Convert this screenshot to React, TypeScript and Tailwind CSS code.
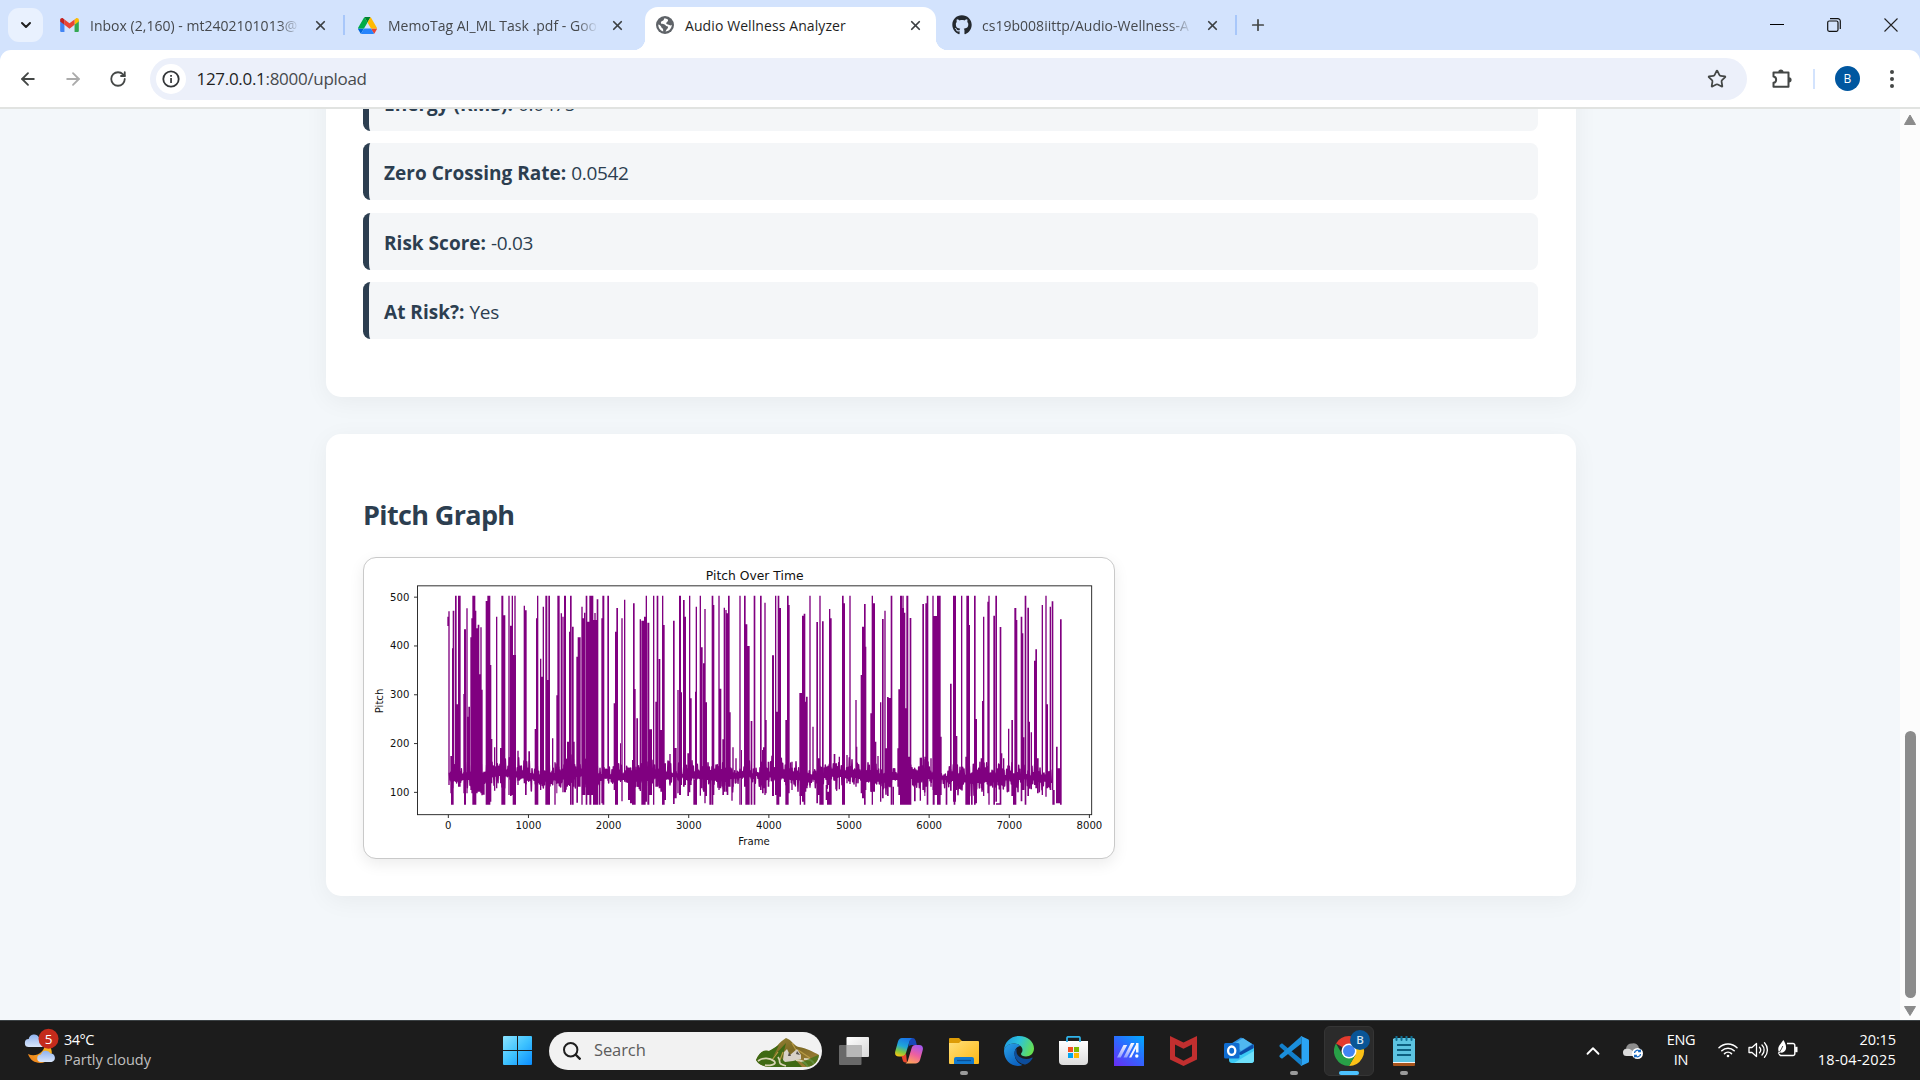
import React from "react";
import { ArrowLeft, ArrowRight, ChevronDown, ChevronUp, Plus, RotateCw, Star, X } from "lucide-react";
import { FaGithub } from "react-icons/fa";

/* ---------- chart ---------- */

// [left, right, top, bottom] of each pitch excursion in chart units
const FIRST: number[][] = [
  [292, 296, 230, 258], [295, 299, 214, 735], [301, 306, 648, 760], [303, 311, 700, 794], [306, 309, 325, 700], [308, 313, 212, 710],
  [315, 320, 167, 725], [320, 325, 493, 725], [324, 332, 167, 740], [340, 343, 462, 760], [342, 348, 268, 794], [349, 353, 205, 760],
  [352, 355, 530, 720], [355, 360, 500, 720], [361, 365, 292, 750], [364, 368, 235, 760], [367, 376, 167, 794], [375, 379, 212, 794],
  [378, 383, 265, 760], [383, 388, 254, 755], [388, 392, 403, 755], [391, 395, 262, 760], [394, 398, 449, 766], [398, 404, 700, 764],
  [407, 412, 183, 794], [412, 421, 167, 794], [420, 424, 375, 785], [424, 427, 597, 730], [432, 436, 622, 752], [438, 442, 230, 745],
  [450, 454, 624, 730], [454, 460, 167, 794], [460, 466, 226, 794], [475, 479, 167, 765], [480, 485, 257, 768], [485, 489, 167, 765], [488, 498, 345, 794],
  [493, 497, 167, 794], [502, 506, 632, 735], [521, 525, 197, 730], [525, 530, 211, 765], [535, 540, 634, 720], [554, 559, 567, 794],
  [558, 562, 235, 794], [561, 565, 167, 794], [570, 574, 356, 750], [574, 578, 410, 720], [578, 582, 200, 740], [586, 592, 167, 794],
  [592, 596, 420, 794], [595, 600, 167, 794], [606, 610, 595, 725], [613, 617, 667, 794], [619, 622, 466, 760], [622, 629, 167, 725],
  [632, 636, 220, 730], [637, 641, 230, 757], [642, 648, 167, 757], [651, 657, 605, 735], [657, 661, 275, 738], [660, 665, 167, 794],
  [666, 671, 260, 794], [670, 674, 605, 740], [679, 684, 350, 788], [683, 692, 292, 740], [694, 698, 200, 794], [698, 706, 235, 765],
  [702, 706, 218, 500], [707, 712, 167, 794], [711, 719, 245, 765], [718, 724, 167, 794], [724, 730, 167, 765], [729, 733, 240, 794],
  [733, 737, 219, 794], [737, 741, 240, 794], [740, 745, 178, 794], [747, 751, 720, 794], [754, 758, 235, 790], [757, 763, 167, 794],
  [772, 777, 167, 722], [791, 795, 490, 750], [795, 799, 275, 794], [799, 804, 204, 794], [810, 813, 610, 725], [814, 818, 235, 784],
  [822, 826, 179, 725], [834, 840, 700, 780], [840, 846, 710, 790], [846, 850, 660, 794], [849, 854, 190, 794], [853, 857, 447, 794],
  [859, 864, 535, 740], [869, 873, 238, 753], [874, 883, 242, 794], [882, 887, 230, 794], [887, 891, 167, 785], [892, 898, 248, 794],
  [898, 906, 568, 765], [909, 913, 167, 794], [916, 920, 485, 740], [920, 925, 167, 740], [926, 931, 357, 745], [931, 936, 570, 755],
  [936, 940, 167, 794], [940, 944, 255, 794], [944, 948, 670, 780], [958, 962, 642, 732], [969, 974, 242, 792], [974, 980, 624, 775],
  [982, 986, 450, 760], [987, 993, 167, 765], [992, 996, 457, 735], [999, 1004, 180, 740], [1004, 1008, 230, 735], [1012, 1017, 640, 768],
  [1017, 1021, 167, 757], [1020, 1025, 475, 735], [1030, 1036, 720, 794], [1035, 1038, 455, 794], [1037, 1041, 200, 794], [1049, 1053, 167, 767],
  [1053, 1058, 322, 745], [1059, 1063, 370, 755], [1063, 1067, 207, 790], [1067, 1071, 487, 768], [1078, 1084, 690, 794], [1085, 1090, 167, 794],
  [1089, 1093, 195, 765], [1105, 1109, 167, 750], [1109, 1114, 446, 745], [1117, 1122, 598, 765], [1121, 1125, 203, 755], [1126, 1130, 210, 755],
  [1130, 1135, 220, 765], [1134, 1139, 167, 740], [1138, 1142, 517, 740], [1144, 1148, 700, 782], [1147, 1151, 622, 740], [1156, 1160, 655, 730],
  [1168, 1172, 167, 794], [1173, 1176, 630, 794], [1182, 1187, 167, 740], [1186, 1192, 253, 794], [1192, 1199, 318, 794],
];

const SECOND: number[][] = [
  [32, 37, 543, 794], [41, 46, 167, 794], [60, 65, 167, 750], [66, 71, 630, 760], [69, 73, 622, 745], [73, 77, 188, 765],
  [77, 80, 540, 760], [83, 88, 665, 740], [96, 102, 346, 768], [105, 109, 167, 765], [109, 113, 515, 794], [113, 118, 167, 794],
  [117, 123, 204, 770], [136, 141, 540, 794], [141, 146, 167, 794], [145, 149, 195, 760], [154, 158, 665, 750], [178, 186, 459, 768],
  [179, 183, 700, 794], [186, 191, 227, 785], [191, 196, 221, 794], [195, 199, 485, 755], [198, 203, 470, 745], [208, 212, 167, 743],
  [217, 221, 560, 725], [229, 234, 246, 790], [233, 238, 655, 765], [238, 242, 167, 794], [242, 246, 680, 794], [246, 251, 244, 794],
  [257, 262, 735, 780], [261, 267, 755, 794], [267, 271, 207, 794], [271, 275, 235, 794], [281, 286, 642, 722], [286, 291, 670, 748],
  [296, 300, 650, 748], [306, 311, 167, 794], [310, 315, 190, 794], [319, 323, 645, 730], [328, 332, 167, 732], [346, 350, 480, 740],
  [348, 352, 620, 730], [362, 366, 405, 760], [366, 373, 260, 775], [372, 377, 192, 794], [375, 379, 320, 750], [391, 395, 520, 755],
  [395, 399, 167, 794], [399, 405, 190, 755], [404, 409, 605, 730], [412, 416, 648, 720], [420, 424, 487, 785], [426, 431, 237, 775],
  [433, 437, 212, 745], [437, 442, 625, 745], [441, 446, 471, 768], [446, 452, 474, 740], [452, 457, 167, 794], [458, 462, 740, 794],
  [472, 476, 625, 740], [475, 480, 448, 765], [480, 486, 167, 794], [485, 492, 204, 794], [487, 491, 167, 794], [492, 496, 218, 794],
  [495, 499, 505, 794], [499, 505, 167, 794], [504, 514, 650, 794], [509, 514, 234, 790], [522, 527, 710, 784], [539, 543, 653, 782],
  [547, 552, 192, 750], [553, 556, 650, 768], [556, 560, 190, 740], [560, 565, 167, 794], [571, 575, 655, 740], [577, 581, 167, 750],
  [578, 584, 700, 794], [581, 592, 228, 765], [591, 602, 167, 794], [601, 605, 590, 765], [617, 622, 720, 794], [630, 635, 431, 752],
  [639, 648, 167, 785], [641, 646, 600, 794], [648, 652, 588, 750], [663, 667, 167, 740], [676, 680, 650, 794], [679, 687, 167, 794],
  [686, 690, 255, 794], [693, 698, 700, 794], [702, 707, 167, 794], [706, 711, 537, 790], [722, 726, 655, 745], [726, 730, 483, 750],
  [729, 733, 230, 768], [742, 746, 185, 760], [745, 749, 167, 794], [760, 765, 227, 794], [766, 771, 167, 785], [768, 784, 790, 794],
  [779, 784, 261, 794], [784, 787, 640, 735], [789, 793, 655, 720], [804, 808, 566, 755], [814, 819, 540, 768], [819, 824, 700, 794],
  [823, 829, 204, 794], [828, 832, 240, 740], [842, 847, 230, 784], [847, 850, 280, 750], [850, 853, 592, 750], [854, 859, 167, 794],
  [862, 867, 203, 768], [866, 870, 545, 745], [872, 876, 577, 748], [882, 886, 362, 735], [886, 891, 328, 745], [891, 896, 655, 760],
  [905, 909, 195, 765], [916, 920, 167, 770], [920, 924, 493, 745], [929, 933, 200, 750], [935, 940, 184, 750], [937, 944, 750, 794],
  [948, 953, 620, 790], [953, 960, 685, 790], [960, 965, 238, 794],
];

const BARS = FIRST.concat(SECOND.map(([a, b, t, d]) => [a + 1170, b + 1170, t, d]));

function noiseBand() {
  let seed = 77;
  const rand = () => {
    seed = (seed * 16807) % 2147483647;
    return seed / 2147483647;
  };
  let d = "";
  for (let x = 298; x < 2106; x += 4) {
    const drift = x > 1700 ? 8 : 0;
    const top = 700 + drift - 50 * rand() * Math.sqrt(rand()) - 6 * Math.sin(x / 33);
    const bottom = 712 + drift + 48 * rand() * rand() + 6 * Math.sin(x / 41);
    d += `${d ? "L" : "M"}${x} ${top.toFixed(0)}L${x + 2} ${bottom.toFixed(0)}`;
  }
  return d;
}

const BAR_PATH = BARS.map(([a, b, t, d]) => `M${a} ${t}H${b}V${d}H${a}Z`).join("");
const NOISE_PATH = noiseBand();

function PitchChart() {
  return (
    <svg viewBox="42 54 2250 900" className="block h-full w-full" fontFamily="'DejaVu Sans', sans-serif" fill="#111">
      <path d={BAR_PATH} fill="#800080" />
      <path d={NOISE_PATH} fill="none" stroke="#800080" strokeWidth="4.5" strokeLinejoin="round" />
      <rect x="202.5" y="137.5" width="2022.5" height="686.5" fill="none" stroke="#222" strokeWidth="2.8" />
      {[0, 1, 2, 3, 4, 5, 6, 7, 8].map((n) => (
        <g key={n}>
          <path d={`M${295 + n * 240.4} 824v10`} stroke="#222" strokeWidth="2.8" />
          <text x={295 + n * 240.4} y="868" fontSize="30.300" textAnchor="middle">{n * 1000}</text>
        </g>
      ))}
      {[1, 2, 3, 4, 5].map((n) => (
        <g key={n}>
          <path d={`M192 ${903.5 - n * 146.4}h10`} stroke="#222" strokeWidth="2.8" />
          <text x="178" y={914 - n * 146.4} fontSize="30.300" textAnchor="end">{n * 100}</text>
        </g>
      ))}
      <text x="1214" y="119" fontSize="37" textAnchor="middle">Pitch Over Time</text>
      <text x="1212" y="914" fontSize="30.300" textAnchor="middle">Frame</text>
      <text transform="translate(100 483) rotate(-90)" fontSize="30.300" textAnchor="middle">Pitch</text>
    </svg>
  );
}

/* ---------- browser icons ---------- */

const Gmail = () => (
  <svg viewBox="0 0 24 18" className="h-[14px] w-[19px]">
    <path d="M0 3v13.4C0 17.3.7 18 1.6 18h3.9V8z" fill="#4285f4" />
    <path d="M18.5 18h3.9c.9 0 1.6-.7 1.6-1.6V3l-5.500 5z" fill="#34a853" />
    <path d="M18.500 2v6.800L24 4.600V2.400c0-2-2.300-3.100-3.900-1.900z" fill="#fbbc04" />
    <path d="M5.500 8.800V2L12 6.900 18.500 2v6.800L12 13.700z" fill="#ea4335" />
    <path d="M0 2.400v2.200l5.500 4.200V2L3.900.5C2.300-.7 0 .400 0 2.400z" fill="#c5221f" />
  </svg>
);

const Drive = () => (
  <svg viewBox="0 0 87.300 78" className="h-[17px] w-[19px]">
    <path d="M6.600 66.850l3.850 6.650c.8 1.400 1.950 2.500 3.300 3.300L27.500 53H0c0 1.550.4 3.100 1.200 4.500z" fill="#0066da" />
    <path d="M43.650 25L29.900 1.200c-1.350.8-2.500 1.900-3.300 3.300l-25.400 44A9 9 0 0 0 0 53h27.500z" fill="#00ac47" />
    <path d="M73.550 76.800c1.350-.8 2.500-1.900 3.300-3.300l9.250-16c.8-1.400 1.200-2.950 1.200-4.500H59.800l5.850 11.500z" fill="#ea4335" />
    <path d="M43.650 25L57.400 1.200C56.050.4 54.500 0 52.900 0H34.400c-1.600 0-3.150.45-4.500 1.200z" fill="#00832d" />
    <path d="M59.800 53H27.500L13.750 76.800c1.350.8 2.900 1.200 4.500 1.200h50.800c1.600 0 3.150-.45 4.500-1.200z" fill="#2684fc" />
    <path d="M73.400 26.500L60.700 4.500c-.8-1.400-1.950-2.500-3.300-3.300L43.650 25 59.800 53h27.450c0-1.550-.4-3.100-1.200-4.500z" fill="#ffba00" />
  </svg>
);

const Globe = () => (
  <svg viewBox="0 0 18 18" className="h-[18px] w-[18px]">
    <circle cx="9" cy="9" r="9" fill="#5f6368" />
    <path d="M8.500 2.200c-1 .8-.3 2-1.600 2.600-1.200.5-2.200.9-2 2.200.3 1.300 2 .9 3.200 1.300 1.500.5 1.300 1.800 3 2 1.300.2 1.200 1.700.2 2.400-1.200.8-1.300 2-1.800 2.900 3.800-.4 6.300-3.300 6.300-6.800-.7.800-1.700 1-2.400.300-.8-.9-2.200-.4-2.900-1.100-.8-.8.2-1.700 1-2.400.5-.5.7-1.300.4-2.100-.9-.6-2.200-1-3.400-1.300zM2.300 8.500c-.1 3.500 2 6.100 4.900 7-.2-1.300.4-2.400-.8-3.200C4.900 11.300 5.200 9.300 2.300 8.500z" fill="#fff" />
  </svg>
);

const Puzzle = () => (
  <svg viewBox="0 0 22 22" className="h-[22px] w-[22px]" fill="none">
    <path d="M2.500 4.500h15v14.300h-15v-4a3.200 3.200 0 0 0 0-6.300z" stroke="#444746" strokeWidth="2" strokeLinejoin="round" />
    <path d="M7.300 4a2.600 2.600 0 0 1 5.200 0zM18 9.200a2.600 2.600 0 0 1 0 5.200z" fill="#444746" />
  </svg>
);

function TabText({ children }: { children: React.ReactNode }) {
  return (
    <span className="w-[212px] whitespace-nowrap text-[14px] tracking-[0.02px] text-[#45484c] [mask-image:linear-gradient(to_right,black_89%,transparent_99%)]">
      {children}
    </span>
  );
}

const CloseX = ({ className = "" }: { className?: string }) => <X size={15} strokeWidth={2.8} className={className} color="#3c4043" />;

function TabStrip() {
  return (
    <div className="flex h-[50px] items-center bg-[#d3e3fd] pl-2">
      <div className="flex h-[34px] w-[35px] items-center justify-center rounded-[11px] bg-[#e9f1fe]">
        <ChevronDown size={16} strokeWidth={3} color="#1f1f1f" />
      </div>
      <div className="ml-[17px] flex w-[285px] items-center">
        <Gmail />
        <span className="ml-[11px] flex"><TabText>Inbox (2,160) - mt2402101013@</TabText></span>
        <CloseX className="ml-[11px]" />
      </div>
      <div className="-ml-[2px] h-5 w-[2px] bg-[#a8c7fa]" />
      <div className="ml-[13px] flex w-[280px] items-center">
        <Drive />
        <span className="ml-[11px] flex"><TabText>MemoTag AI_ML Task .pdf - Goo</TabText></span>
        <CloseX className="ml-[10px]" />
      </div>
      <div className="relative ml-[7px] mt-[7px] flex h-[43px] w-[291px] items-center rounded-t-[13px] bg-white pb-[7px] pl-[11px]">
        <span className="absolute -left-3 bottom-0 h-3 w-3 bg-[radial-gradient(circle_at_0_0,transparent_12px,white_12.500px)]" />
        <span className="absolute -right-3 bottom-0 h-3 w-3 bg-[radial-gradient(circle_at_100%_0,transparent_12px,white_12.500px)]" />
        <Globe />
        <span className="ml-[11px] w-[210px] whitespace-nowrap text-[14px] tracking-[0.09px] text-[#1f1f1f]">Audio Wellness Analyzer</span>
        <CloseX className="ml-[12.500px]" />
      </div>
      <FaGithub size={20} color="#24292f" className="ml-[16px]" />
      <span className="ml-[10px] flex"><TabText>cs19b008iittp/Audio-Wellness-A</TabText></span>
      <CloseX className="ml-[11px]" />
      <div className="ml-[15px] h-5 w-[2px] bg-[#a8c7fa]" />
      <Plus size={18} strokeWidth={2.300} color="#444746" className="ml-[11.500px]" />
      <div className="ml-auto flex items-center gap-[43px] pr-[22px]">
        <svg className="h-[14px] w-[14px]" viewBox="0 0 14 14"><path d="M0 6.500h14" stroke="#000" /></svg>
        <svg className="h-[14px] w-[14px]" viewBox="0 0 14 14" fill="none" stroke="#111" strokeWidth="1.200">
          <rect x=".7" y="3" width="10.300" height="10.300" rx="1.500" />
          <path d="M3 .7h7.800a2.500 2.500 0 0 1 2.500 2.500V11" />
        </svg>
        <svg className="h-[14px] w-[14px]" viewBox="0 0 14 14"><path d="M.5.5l13 13M13.500.5l-13 13" stroke="#222" strokeWidth="1.100" /></svg>
      </div>
    </div>
  );
}

function Toolbar() {
  return (
    <div className="bg-[#d3e3fd]">
      <div className="flex h-[59px] items-center rounded-t-[11px] border-b-2 border-[#e1e3e1] bg-white pl-[18px]">
        <ArrowLeft size={20} strokeWidth={2.200} color="#444746" />
        <ArrowRight size={20} strokeWidth={2.200} color="#ababab" className="ml-[25px]" />
        <RotateCw size={18} strokeWidth={2.400} color="#444746" className="ml-[25.500px]" />
        <div className="ml-[23.500px] flex h-[42px] w-[1597px] items-center rounded-full bg-[#ecf0fa] pl-[6px] pr-[20px]">
          <span className="flex h-[30px] w-[30px] items-center justify-center rounded-full bg-white">
            <svg viewBox="0 0 18 18" className="h-[18px] w-[18px]">
              <circle cx="9" cy="9" r="7.700" fill="none" stroke="#333638" strokeWidth="1.800" />
              <path d="M8.200 8h1.700v5H8.200zM8.200 5h1.700v1.700H8.200z" fill="#333638" />
            </svg>
          </span>
          <span className="ml-[10.500px] mt-px text-[17px] tracking-[-0.3px] text-[#474a4d]"><span className="text-[#1f1f1f]">127.0.0.1</span>:8000/upload</span>
          <Star size={20} strokeWidth={2.100} color="#444746" className="ml-auto [stroke-linejoin:miter]" />
        </div>
        <span className="ml-[24px]"><Puzzle /></span>
        <div className="ml-[20px] h-5 w-[2px] bg-[#d3e3fd]" />
        <span className="ml-[20px] flex h-[25px] w-[25px] items-center justify-center rounded-full bg-[#0057a0] text-[12px] text-white">B</span>
        <div className="ml-[30px] flex flex-col gap-[3px]">
          <i className="h-1 w-1 rounded-full bg-[#444746]" />
          <i className="h-1 w-1 rounded-full bg-[#444746]" />
          <i className="h-1 w-1 rounded-full bg-[#444746]" />
        </div>
      </div>
    </div>
  );
}

/* ---------- page ---------- */

function Metric({ label, value }: { label: string; value: string }) {
  return (
    <li className="mb-[12.400px] h-[57px] rounded-[7.500px] border-l-[6px] border-[#2c3e50] bg-[#f4f6f8] pl-[15px] leading-[60px]">
      <b className="font-bold tracking-[0.02px]">{label}:</b> <span className="tracking-[-0.3px]">{value}</span>
    </li>
  );
}

function Page() {
  return (
    <div className="flex h-[911px] overflow-hidden bg-[#f3f7fa]">
      <main className="w-[1900px] pl-[326px] text-[19px] text-[#2c3e50]">
        <section className="-mt-[72px] h-[360px] w-[1250px] rounded-[15px] bg-white pl-[37px] pr-[38px] pt-[37px] shadow-[0_5px_25px_rgba(0,0,0,0.05)]">
          <ul>
            <Metric label="Energy (RMS)" value="0.0475" />
            <Metric label="Zero Crossing Rate" value="0.0542" />
            <Metric label="Risk Score" value="-0.03" />
            <Metric label="At Risk?" value="Yes" />
          </ul>
        </section>
        <section className="mt-[37px] h-[462px] w-[1250px] rounded-[15px] bg-white px-[37px] pt-[61px] shadow-[0_5px_25px_rgba(0,0,0,0.05)]">
          <h2 className="text-[27px] font-bold leading-[40px] tracking-[-0.640px]">Pitch Graph</h2>
          <div className="mt-[22px] h-[302px] w-[752px] overflow-hidden rounded-[13px] border border-[#c9c9c9] bg-white shadow-[0_5px_15px_rgba(0,0,0,0.08)]">
            <PitchChart />
          </div>
        </section>
      </main>
      <div className="flex w-5 flex-col items-center bg-[#fcfcfc] pt-[6px]">
        <svg viewBox="0 0 12 10" className="h-[10px] w-[12px]"><path d="M6 0l5.500 9.500H.5z" fill="#8b8b8b" stroke="#8b8b8b" strokeLinejoin="round" /></svg>
        <div className="mt-[606px] h-[267px] w-[11px] rounded-full bg-[#8b8b8b]" />
        <svg viewBox="0 0 12 10" className="mt-[8px] h-[10px] w-[12px]"><path d="M6 9.500L.5.500h11z" fill="#8b8b8b" stroke="#8b8b8b" strokeLinejoin="round" /></svg>
      </div>
    </div>
  );
}

/* ---------- taskbar ---------- */

function AppCell({ children, mark }: { children: React.ReactNode; mark?: "idle" | "active" }) {
  return (
    <div className="relative flex h-[60px] w-[55px] shrink-0 items-center justify-center">
      {mark === "active" && <span className="absolute left-[3px] top-[5px] h-[50px] w-[50px] rounded-[6px] border border-[#353535] bg-[#2b2b2b]" />}
      <span className="relative flex">{children}</span>
      {mark === "idle" && <span className="absolute bottom-[6px] h-1 w-2 rounded-full bg-[#9a9a9a]" />}
      {mark === "active" && <span className="absolute bottom-[6px] h-1 w-5 rounded-full bg-[#4cc2ff]" />}
    </div>
  );
}

const Weather = () => (
  <svg viewBox="0 0 36 36" className="h-9 w-9">
    <defs>
      <linearGradient id="cloud" x1="0" y1="0" x2="0" y2="1"><stop stopColor="#8fb2ee" /><stop offset="1" stopColor="#d9e6fb" /></linearGradient>
      <linearGradient id="moon" x1="1" y1="0" x2="0" y2="1"><stop stopColor="#fbc120" /><stop offset="1" stopColor="#ee7c1d" /></linearGradient>
    </defs>
    <path d="M25 17c3 4 4 9 1 13-6 8-19 6-22-4 8 4 16-2 17-9z" fill="url(#moon)" />
    <path d="M5 19a4 4 0 0 1-.3-8A5.500 5.500 0 0 1 15 9.500 5 5 0 0 1 18 19z" fill="url(#cloud)" />
    <path d="M17 34a3.700 3.700 0 0 1 0-7.500 5.200 5.200 0 0 1 9.500-1A4.300 4.300 0 0 1 27.500 34z" fill="url(#cloud)" />
    <circle cx="24.500" cy="10.800" r="10" fill="#c42b1c" />
    <text x="24.500" y="15.600" fontSize="13.500" fill="#fff" textAnchor="middle">5</text>
  </svg>
);

const Windows = () => (
  <svg viewBox="0 0 29 29" className="h-[29px] w-[29px]">
    <defs><linearGradient id="win" gradientUnits="userSpaceOnUse" x1="0" y1="0" x2="29" y2="29"><stop stopColor="#8be3ff" /><stop offset=".5" stopColor="#3fc3ff" /><stop offset="1" stopColor="#0a8dff" /></linearGradient></defs>
    <path d="M1 0h13v14H0V1a1 1 0 0 1 1-1zM15 0h13a1 1 0 0 1 1 1v13H15zM0 15h14v14H1a1 1 0 0 1-1-1zM15 15h14v13a1 1 0 0 1-1 1H15z" fill="url(#win)" />
  </svg>
);

const Landscape = () => (
  <svg viewBox="0 0 63 30" className="h-[30px] w-[63px]">
    <defs>
      <linearGradient id="mt" x1="0" y1="0" x2="1" y2="1"><stop stopColor="#9a8a3a" /><stop offset=".5" stopColor="#7d6a24" /><stop offset="1" stopColor="#a8843c" /></linearGradient>
    </defs>
    <path d="M0 22C3 15 7 12 13 13c6-1 10-9 17-13 6 2 8 8 13 9 7 1 15 5 20 8-1 7-5 11-12 12H12C6 28 2 26 0 22z" fill="url(#mt)" />
    <path d="M0 22C3 15 7 11 13 13l10-6-6 12 13-14-4 16 12-1 8 9H12C6 28 2 26 0 22z" fill="#3f6a14" />
    <path d="M24 22l3-8M16 22l6-8M42 12l12 8M36 5l4 7" stroke="#b99b45" strokeWidth="1.200" fill="none" />
    <path d="M27 22l1-8 3-3 3 6 7-6 4 6v4l-8 2-8 1z" fill="#d8d2c8" />
    <path d="M32 18l1-4 2 4zM40 16l1-3 3 4z" fill="#55504c" />
    <path d="M2 23c5-4 12-3 16 0 4 4-6 5-9 4M22 19c4 6-2 6 8 9M40 22c6 0 10 3 12 7M48 21c5 0 9 2 10 5" stroke="#d8d3b4" strokeWidth="1.800" fill="none" />
    <path d="M45 24c6-1 11-5 18-7-1 7-5 11-12 12z" fill="#3c7417" opacity=".75" />
  </svg>
);

const TaskView = () => (
  <svg viewBox="0 0 30 28" className="h-7 w-[30px]">
    <defs><linearGradient id="tvw" x1="0" y1="0" x2="1" y2="1"><stop stopColor="#fff" /><stop offset="1" stopColor="#d8d8d8" /></linearGradient></defs>
    <rect x="7.500" width="22.500" height="20" rx="1" fill="url(#tvw)" />
    <rect y="8" width="22.500" height="20" rx="1" fill="#777" opacity=".85" />
    <path d="M7.500 8h15v12h-15z" fill="#b8b8b8" />
  </svg>
);

const Copilot = () => (
  <svg viewBox="0 0 28 26" className="h-[26px] w-7">
    <defs>
      <linearGradient id="cpa" x1=".6" y1="0" x2=".3" y2="1"><stop stopColor="#1976e8" /><stop offset=".45" stopColor="#20a7d8" /><stop offset=".75" stopColor="#7fc840" /><stop offset="1" stopColor="#f4c414" /></linearGradient>
      <linearGradient id="cpb" x1=".7" y1="0" x2=".3" y2="1"><stop stopColor="#a557ee" /><stop offset=".5" stopColor="#ee5fa0" /><stop offset="1" stopColor="#ffa45a" /></linearGradient>
    </defs>
    <path d="M15 0h2.500c2 0 2.500 1 3.300 3l1 4h-5c-2 0-3 1-3.500 3z" fill="#1748b8" />
    <path d="M7 0h10c-2 1-2.500 3-3 5l-3 10c-.7 2-1.500 3.500-4 3.500H4c-4 0-4.500-3-3.500-6l2.500-9C3.700 1.500 5 0 7 0z" fill="url(#cpa)" />
    <path d="M12 24.500h-1.500c-2 0-2.500-1-3-3L6.500 18c3 0 4-1 4.500-3z" fill="#e8452c" />
    <path d="M20.500 25.500h-10c2-1 2.500-3 3-5l3-10c.7-2 1.500-3.500 4-3.500h3.500c4 0 4.500 3 3.500 6l-2.500 9c-.7 2-2.500 3.500-4.500 3.500z" fill="url(#cpb)" />
  </svg>
);

const Explorer = () => (
  <svg viewBox="0 0 30 26" className="h-[26px] w-[30px]">
    <defs><linearGradient id="fold" x1="0" y1="0" x2="1" y2="1"><stop stopColor="#ffe07a" /><stop offset="1" stopColor="#fdb813" /></linearGradient></defs>
    <path d="M0 1a1 1 0 0 1 1-1h9l3 3h16v6H0z" fill="#dd9c06" />
    <path d="M0 5h10l2-2h17a1 1 0 0 1 1 1v21a1 1 0 0 1-1 1H1a1 1 0 0 1-1-1z" fill="url(#fold)" />
    <path d="M5 26v-5a2 2 0 0 1 2-2h16a2 2 0 0 1 2 2v5z" fill="#1079d0" />
    <path d="M8 22.500h14" stroke="#0a4f94" strokeWidth="1.300" />
  </svg>
);

const Edge = () => (
  <svg viewBox="0 0 30 30" className="h-[30px] w-[30px]">
    <defs>
      <linearGradient id="ea" x1="0" y1=".3" x2="1" y2=".6"><stop stopColor="#1f9be0" /><stop offset=".45" stopColor="#2cc3dc" /><stop offset="1" stopColor="#68e04c" /></linearGradient>
      <linearGradient id="eb" x1="0" y1="0" x2=".6" y2="1"><stop stopColor="#2aa2e8" /><stop offset="1" stopColor="#0c62c0" /></linearGradient>
    </defs>
    <path d="M0 15C0 6 7 0 15 0c9 0 15 6 15 12.500 0 5-4 8-8 8-3 0-5-1-5-2.500 0-1 1.500-1.500 1.500-4C18.500 10 14 7.500 10 7.500 5 7.500 0 11 0 15z" fill="url(#ea)" />
    <path d="M0 15c0-4.500 5-7.500 10-7.500 2.500 0 5 1 6.500 2.500-3 0-6 3-6 7.500 0 6 4 10 8 11.500-9 3.500-18.500-3.500-18.500-14z" fill="url(#eb)" />
    <path d="M12.500 12.500c-1.500 1.500-2 3-2 5 0 7 7 11 11 11 3-1 6-4 7-6.300.2-.5-.3-.8-.8-.5-6 3-14.700 0-15.200-5.700z" fill="#0d4d9c" />
  </svg>
);

const Store = () => (
  <svg viewBox="0 0 29 29" className="h-[29px] w-[29px]">
    <defs><linearGradient id="bag" x1="0" y1="0" x2="0" y2="1"><stop stopColor="#fff" /><stop offset="1" stopColor="#dcdcdc" /></linearGradient></defs>
    <path d="M0 5h29v20a4 4 0 0 1-4 4H4a4 4 0 0 1-4-4z" fill="url(#bag)" />
    <path d="M8 6V2a1.200 1.200 0 0 1 1.200-1.200h10.600A1.200 1.200 0 0 1 21 2v4" fill="none" stroke="#30b4ea" strokeWidth="1.700" />
    <path d="M9 11h5v5H9z" fill="#f25022" /><path d="M15 11h5v5h-5z" fill="#7fba00" />
    <path d="M9 17h5v5H9z" fill="#00a4ef" /><path d="M15 17h5v5h-5z" fill="#ffb900" />
  </svg>
);

const MyAsus = () => (
  <svg viewBox="0 0 30 30" className="h-[30px] w-[30px]">
    <defs>
      <linearGradient id="asus" x1="0" y1="1" x2=".8" y2="0"><stop stopColor="#6a2cf5" /><stop offset=".6" stopColor="#2b6cff" /><stop offset="1" stopColor="#08a0ff" /></linearGradient>
      <linearGradient id="stripe" x1="0" y1="1" x2="0" y2="0"><stop stopColor="#8f9cff" /><stop offset="1" stopColor="#fff" /></linearGradient>
    </defs>
    <path d="M0 0h30v30H0z" fill="url(#asus)" />
    <path d="M3 21.500L9.500 9h3.700L6.700 21.500zM9.500 21.500L17 7h3.500L13 21.500z" fill="url(#stripe)" />
    <path d="M15 21.500L22 8.500V7h2.500v9.500H22v-4l-4.700 9z" fill="#f4f6ff" />
    <circle cx="22.800" cy="20" r="1.700" fill="#fff" />
  </svg>
);

const McAfee = () => (
  <svg viewBox="0 0 27 30" className="h-[30px] w-[27px]">
    <path d="M0 0l13.500 6.500L27 0v23.500L13.500 30 0 23.500zM5 8.500v11.700l8.500 4.600 8.500-4.600V8.500l-8.500 4.300z" fill="#c22f2f" fillRule="evenodd" />
  </svg>
);

const Outlook = () => (
  <svg viewBox="0 0 30 27" className="h-[27px] w-[30px]">
    <path d="M5 8L17 .5 30 8v5L18 19H5z" fill="#2a8de0" />
    <path d="M10 7l9-6 9 6-11 7z" fill="#50b8f0" />
    <path d="M13 17L29.500 7v8L17 22z" fill="#0c4ea8" />
    <path d="M5 15l12 3 13-7v12a3 3 0 0 1-3 3H8a3 3 0 0 1-3-3z" fill="#3ccaf5" />
    <path d="M10 26L30 14v9a3 3 0 0 1-3 3z" fill="#6fe0fb" />
    <rect y="6" width="15.500" height="15.500" rx="1.500" fill="#0f6cd0" />
    <ellipse cx="7.700" cy="13.700" rx="3.600" ry="4.200" fill="none" stroke="#fff" strokeWidth="2.300" />
  </svg>
);

const Code = () => (
  <svg viewBox="0 0 30 30" className="h-[30px] w-[30px]">
    <path d="M1.200 8.500L3 7.300l19.500 16.200L22.500 30 .9 11c-.8-.8-.6-1.800.3-2.500z" fill="#1380cc" />
    <path d="M1.200 21.500L3 22.700 22.500 7.500V0L.9 19c-.8.8-.6 1.800.3 2.500z" fill="#1b8fdc" />
    <path d="M22 0l7 3.300c.7.300 1 .8 1 1.500v20.400c0 .7-.3 1.200-1 1.500L22 30c-.8 0 .5-.5.5-2V2c0-1.500-1.300-2-.5-2z" fill="#2ba4f4" />
  </svg>
);

const Chrome = () => (
  <svg viewBox="0 0 36 36" className="-mr-[6px] -mt-[6px] h-9 w-9">
    <path d="M15 21L2 13.500A15 15 0 0 1 28 13.500z" fill="#e33b2e" />
    <path d="M15 21l13-7.500A15 15 0 0 1 15 36l6.500-11.300z" fill="#fbc116" />
    <path d="M15 21l6.500 3.800L15 36A15 15 0 0 1 2 13.500l6.500 11.300z" fill="#28a047" />
    <circle cx="15" cy="21" r="7.500" fill="#fff" />
    <circle cx="15" cy="21" r="6" fill="#4285f4" />
    <circle cx="26" cy="10" r="10" fill="#0a5596" />
    <text x="26" y="14.300" fontSize="11.500" fontWeight="600" fill="#d5e4f2" textAnchor="middle">B</text>
  </svg>
);

const Notepad = () => (
  <svg viewBox="0 0 22 30" className="h-[30px] w-[22px]">
    <path d="M0 26h22v3a1 1 0 0 1-1 1H1a1 1 0 0 1-1-1z" fill="#a8541c" />
    <path d="M0 3h22v24H0z" fill="#f5f5f5" />
    <path d="M0 4a2 2 0 0 1 2-2h18a2 2 0 0 1 2 2v22H0z" fill="#5cc3e0" />
    <path d="M3.500 0v4M8.500 0v4M13.500 0v4M18.500 0v4" stroke="#0f6f92" strokeWidth="2" strokeLinecap="round" />
    <path d="M4 9h14M4 14h14M4 19h14" stroke="#0c5f80" strokeWidth="2" />
  </svg>
);

const CloudSync = () => (
  <svg viewBox="0 0 20 17" className="ml-[17px] h-[17px] w-5">
    <path d="M3.500 13A3.300 3.300 0 0 1 3 6.500 5.500 5.500 0 0 1 9 1.500a5.500 5.500 0 0 1 7 5l-6 6.500z" fill="#8d8d8d" />
    <path d="M3.500 14A3.500 3.500 0 0 1 3.500 7c3-1 5 1 7 3v4z" fill="#dcdcdc" />
    <circle cx="14.500" cy="11.500" r="5.500" fill="#fff" />
    <path d="M11.500 11a3 3 0 0 1 5.500-1.500M17.500 12a3 3 0 0 1-5.500 1.500M17.300 7.500v2.200h-2.200M11.700 15.500v-2.200h2.200" fill="none" stroke="#1668c0" strokeWidth="1.300" />
  </svg>
);

const Wifi = () => (
  <svg viewBox="0 0 20 16" className="h-4 w-5" fill="none" stroke="#fff" strokeWidth="1.500" strokeLinecap="round">
    <path d="M1 5.800a12.700 12.700 0 0 1 18 0M3.800 8.800a8.800 8.800 0 0 1 12.400 0M6.500 11.600a5 5 0 0 1 7 0" />
    <circle cx="10" cy="14" r="1.300" fill="#fff" stroke="none" />
  </svg>
);

const Volume = () => (
  <svg viewBox="0 0 20 18" className="h-[18px] w-5" fill="none" stroke="#fff" strokeWidth="1.300" strokeLinecap="round" strokeLinejoin="round">
    <path d="M1 6.500h3L8.500 2.500v13L4 11.500H1zM11.500 6.300a4 4 0 0 1 0 5.400M14 4a7 7 0 0 1 0 10M16.500 1.800a10.500 10.500 0 0 1 0 14.400" />
  </svg>
);

const Battery = () => (
  <svg viewBox="0 0 21 18" className="h-[18px] w-[21px]" fill="none" stroke="#fff" strokeWidth="1.400">
    <path d="M10 3.500h6A1.800 1.800 0 0 1 17.800 5.300v8.400A1.800 1.800 0 0 1 16 15.500H3.500L2 14" />
    <path d="M18.800 7.500h1v4h-1z" fill="#fff" />
    <path d="M6.300 0C8 2.500 9.800 6 8.800 9.500 8 12 5.500 13 3 12.500L1.500 14 .8 13.300l1-1.500C-.2 7 3.500 4.500 6.300 0z" fill="#fff" stroke="none" />
    <path d="M2.500 12C4 10 5 8 5.800 6" stroke="#1c1c1c" strokeWidth=".8" />
  </svg>
);

function Taskbar() {
  return (
    <footer className="flex h-[60px] items-center border-t border-[#3b4144] bg-[#1c1c1c] text-[14.500px] text-white">
      <span className="-mt-[9px] ml-[24px]"><Weather /></span>
      <div className="-mt-[2px] ml-[4px] w-[439px] leading-[20px]">
        <div className="tracking-[-0.5px]">34°C</div>
        <div className="text-[#c0c0c0]">Partly cloudy</div>
      </div>
      <Windows />
      <div className="ml-[17px] flex h-[38px] w-[273px] items-center rounded-full bg-[#f2f2f2] pl-[14px] pr-[3px]">
        <svg viewBox="0 0 18 18" className="h-[18px] w-[18px]" fill="none" stroke="#1f1f1f" strokeWidth="2"><circle cx="7.700" cy="7.700" r="6.700" /><path d="M12.500 12.500l5 5" strokeWidth="2.400" /></svg>
        <span className="ml-[13px] text-[16.500px] tracking-[-0.1px] text-[#5c5c5c]">Search</span>
        <span className="ml-auto mt-[4px]"><Landscape /></span>
      </div>
      <div className="ml-[4px] flex">
        <AppCell><TaskView /></AppCell>
        <AppCell><Copilot /></AppCell>
        <AppCell mark="idle"><Explorer /></AppCell>
        <AppCell><Edge /></AppCell>
        <AppCell><Store /></AppCell>
        <AppCell><MyAsus /></AppCell>
        <AppCell><McAfee /></AppCell>
        <AppCell><Outlook /></AppCell>
        <AppCell mark="idle"><Code /></AppCell>
        <AppCell mark="active"><Chrome /></AppCell>
        <AppCell mark="idle"><Notepad /></AppCell>
      </div>
      <ChevronUp size={22} strokeWidth={2} className="ml-[151px]" />
      <span className="ml-[2px] flex"><CloudSync /></span>
      <div className="-mt-px ml-[18px] w-[40px] text-center leading-[20px] tracking-[-0.300px]">ENG<br />IN</div>
      <span className="ml-[17px] -mt-[2px]"><Wifi /></span>
      <span className="ml-[10px] -mt-[2px]"><Volume /></span>
      <span className="ml-[9px] -mt-[3px]"><Battery /></span>
      <div className="-mt-[2px] ml-auto pr-[24px] text-right leading-[20px]"><span className="tracking-[-0.100px]">20:15</span><br /><span className="tracking-[0.250px]">18-04-2025</span></div>
    </footer>
  );
}

export default function App() {
  return (
    <div className="h-[1080px] w-[1920px] overflow-hidden font-['Open_Sans','Noto_Sans',sans-serif]">
      <TabStrip />
      <Toolbar />
      <Page />
      <Taskbar />
    </div>
  );
}
